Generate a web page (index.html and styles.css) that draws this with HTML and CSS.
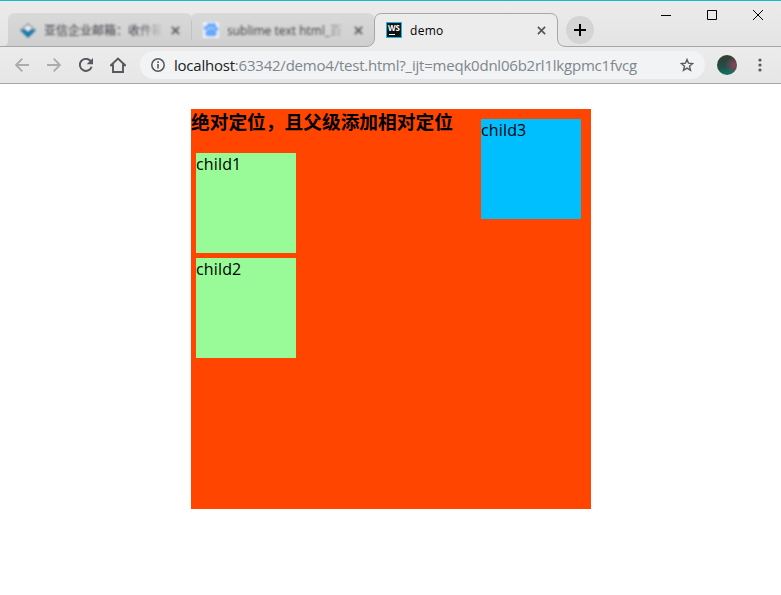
FILE: index.html
```html
<!DOCTYPE html>
<html lang="zh-CN">
<head>
<meta charset="utf-8">
<title>demo</title>
<link rel="stylesheet" href="styles.css">
</head>
<body>
<header class="browser">
  <div class="tabstrip">
    <svg class="tab-shapes" width="781" height="34" viewBox="0 0 781 34">
      <defs><linearGradient id="g" x1="0" y1="0" x2="0" y2="1"><stop offset="0" stop-color="#d9d9d9"/><stop offset="1" stop-color="#cfcfcf"/></linearGradient></defs>
      <path d="M3 33Q8 33 8 27V7Q8 0 15 0H184Q191 0 191.500 4Q192 0 199 0H366Q373 0 374 4V25Q374 33 367 33Z" fill="url(#g)"/>
      <path d="M191.500 7V27" stroke="#c2c2c2"/>
      <path d="M0 33.500H366Q374.500 33 374.500 25V8Q374.500.5 382 .5H550Q557.500.5 557.500 8V25Q557.500 33.500 566 33.500H781V35H0Z" fill="#ececec"/>
      <path d="M0 33.500H366Q374.500 33 374.500 25V8Q374.500.5 382 .5H550Q557.500.5 557.500 8V25Q557.500 33.500 566 33.500H781" fill="none" stroke="#a6a6a6"/>
    </svg>
    <div class="tab muted first">
      <svg class="favicon" viewBox="0 0 16 16"><path d="M8 1L16 8 8 15 0 8Z" fill="#8799a3"/><path d="M0 8L16 8 8 16Z" fill="#1977aa"/><path d="M8 3L12 6 8 10 4 6Z" fill="#eee"/></svg>
      <span class="tab-title">亚信企业邮箱：收件箱</span>
      <svg class="close" viewBox="0 0 10 10"><path d="M1 1L9 9M9 1L1 9"/></svg>
    </div>
    <div class="tab muted second">
      <svg class="favicon" viewBox="0 0 16 16"><path fill="#edf2fa" d="M0 0H16V16H0Z"/><path d="M8 6Q13 8 14 12 13 15 8 14 3 15 2 12 3 8 8 6Z" fill="#68a8fb"/><g fill="#68a8fb"><circle cx="3" cy="6" r="2.200"/><circle cx="6.500" cy="3.500" r="2.500"/><circle cx="10.500" cy="3.500" r="2.500"/><circle cx="13" cy="7" r="2.200"/></g></svg>
      <span class="tab-title">sublime text html_百</span>
      <svg class="close" viewBox="0 0 10 10"><path d="M1 1L9 9M9 1L1 9"/></svg>
    </div>
    <div class="tab active">
      <svg class="favicon" viewBox="0 0 16 16"><path d="M0 0H16V16H0Z" fill="#08bde2"/><path d="M1 1H15V15H1Z" fill="#111"/><path d="M3 12.500H9" stroke="#fff"/><text class="ws" x="1.900" y="8.500" textLength="12" lengthAdjust="spacingAndGlyphs">WS</text></svg>
      <span class="tab-title">demo</span>
      <svg class="close" viewBox="0 0 10 10"><path d="M1 1L9 9M9 1L1 9"/></svg>
    </div>
    <div class="new-tab"><svg width="12" height="12"><path d="M0 6H12M6 0V12" stroke="#000" stroke-width="2"/></svg></div>
    <div class="window-controls">
      <svg width="10" height="10"><path d="M0 5.500H10"/></svg>
      <svg width="10" height="10"><path d="M.5.5H9.500V9.500H.5Z"/></svg>
      <svg width="10" height="10"><path d="M0 0L10 10M10 0L0 10"/></svg>
    </div>
  </div>
  <div class="toolbar">
    <svg class="nav" viewBox="0 0 14 14"><path d="M14 7H1M7.300.7L1 7 7.300 13.300" class="pale"/></svg>
    <svg class="nav" viewBox="0 0 14 14"><path d="M0 7H13M6.700.7L13 7 6.700 13.300" class="pale"/></svg>
    <svg class="nav" viewBox="0 0 14 14"><path d="M12.600 8.700A6 6 0 1 1 11.300 2.800L13 4.500" fill="none" stroke="#55585c" stroke-width="2"/><path d="M14 0V6.300H7.700Z" fill="#55585c"/></svg>
    <svg class="home" viewBox="0 0 16 16"><path d="M1 8.200L8 1.500 15 8.200H13V15H3V8.200Z" fill="none" stroke="#55585c" stroke-width="1.900"/></svg>
    <div class="omnibox">
      <svg class="info" viewBox="0 0 14 14"><circle cx="7" cy="7" r="6.200" fill="none" stroke="#55585c" stroke-width="1.500"/><path d="M7 6V10.500M7 3.300V5" stroke="#55585c" stroke-width="1.600"/></svg>
      <span class="url"><span class="host">localhost</span>:63342/demo4/test.html?_ijt=meqk0dnl06b2rl1lkgpmc1fvcg</span>
      <svg class="star" viewBox="0 0 14 14"><path d="M7 1.500L8.500 5.200 12.700 5.500 9.500 8.200 10.500 12.300 7 10.100 3.500 12.300 4.500 8.200 1.300 5.500 5.500 5.200Z" fill="none" stroke="#55585c" stroke-width="1.350"/></svg>
    </div>
    <div class="avatar"></div>
    <svg class="menu" width="4" height="14" fill="#55585c"><circle cx="2" cy="2" r="1.600"/><circle cx="2" cy="7" r="1.600"/><circle cx="2" cy="12" r="1.600"/></svg>
  </div>
</header>
<main class="parent">
  <h3>绝对定位，且父级添加相对定位</h3>
  <div class="child">child1</div>
  <div class="child">child2</div>
  <div class="child pinned">child3</div>
</main>
</body>
</html>
```
FILE: styles.css
```css
* { box-sizing: border-box; }
body {
  margin: 0;
  height: 595px;
  background: #fff;
  color: #000;
  font-family: "Open Sans", "Noto Sans CJK SC", sans-serif;
}
svg { display: block; flex: none; }
.browser { height: 84px; border-bottom: 1px solid #a5a5a5; }
.tabstrip {
  position: relative;
  display: flex;
  height: 47px;
  padding-left: 8px;
  border-top: 1px solid #18b9c7;
  background: linear-gradient(#ebebeb, #e4e4e4);
}
.tab-shapes { position: absolute; left: 0; top: 12px; }
.tab {
  position: relative;
  display: flex;
  align-items: center;
  width: 183px;
  height: 34px;
  margin-top: 12px;
  padding-left: 12px;
  font-size: 12px;
}
.muted .favicon, .muted .tab-title, .muted .close { filter: blur(1.2px); }
.favicon { width: 16px; height: 16px; }
.tab-title {
  width: 119px;
  margin-left: 8px;
  white-space: nowrap;
}
.first .tab-title { overflow: hidden; }
.active .tab-title { letter-spacing: 0.3px; }
.muted .tab-title {
  color: #3f3a42;
  mask-image: linear-gradient(90deg, #000 78%, transparent);
}
.close { width: 9px; height: 9px; margin-left: 8px; fill: none; stroke: #55585c; stroke-width: 1.9; }
.ws { font: bold 8.5px "Open Sans", sans-serif; fill: #fff; }
.new-tab {
  position: relative;
  display: grid;
  place-items: center;
  width: 28px;
  height: 28px;
  margin: 15px 0 0 9px;
  border-radius: 50%;
  background: #d4d4d4;
}
.window-controls {
  display: flex;
  gap: 36px;
  margin: 9px 18px 0 auto;
  fill: none;
  stroke: #000;
}
.toolbar {
  display: flex;
  align-items: center;
  height: 36px;
  padding-left: 15px;
  background: linear-gradient(#ececec, #e6e6e6);
}
.nav { width: 14px; height: 14px; margin-right: 18px; }
.pale { fill: none; stroke: #acacac; stroke-width: 1.9; }
.home { width: 16px; height: 16px; margin-left: -1px; }
.omnibox {
  display: flex;
  align-items: center;
  width: 565px;
  height: 28px;
  margin-left: 14px;
  padding: 0 11px;
  border-radius: 14px;
  background: #f1f3f4;
}
.info { width: 14px; height: 14px; }
.url { margin-left: 9px; color: #80868b; font-size: 15px; letter-spacing: -0.22px; white-space: nowrap; }
.host { color: #202124; }
.star { width: 14px; height: 14px; margin-left: auto; }
.avatar {
  width: 20px;
  height: 20px;
  margin-left: 12px;
  border-radius: 50%;
  background: radial-gradient(circle at 85% 50%, #8b4553, transparent 45%), linear-gradient(170deg, #303f30 15%, #244d4b 55%, #07806c);
}
.menu { margin-left: 21px; }
.parent {
  position: relative;
  width: 400px;
  height: 400px;
  margin: 25px 0 0 191px;
  background: #ff4500;
}
h3 {
  margin: 0 0 20px;
  font: bold 18.72px/24px "Noto Sans CJK SC", sans-serif;
}
.child {
  width: 100px;
  height: 100px;
  margin: 5px;
  background: #98fb98;
  font-size: 16px;
  letter-spacing: 0.15px;
  line-height: 23px;
}
.pinned { position: absolute; top: 10px; right: 10px; margin: 0; background: #00bfff; }
```
